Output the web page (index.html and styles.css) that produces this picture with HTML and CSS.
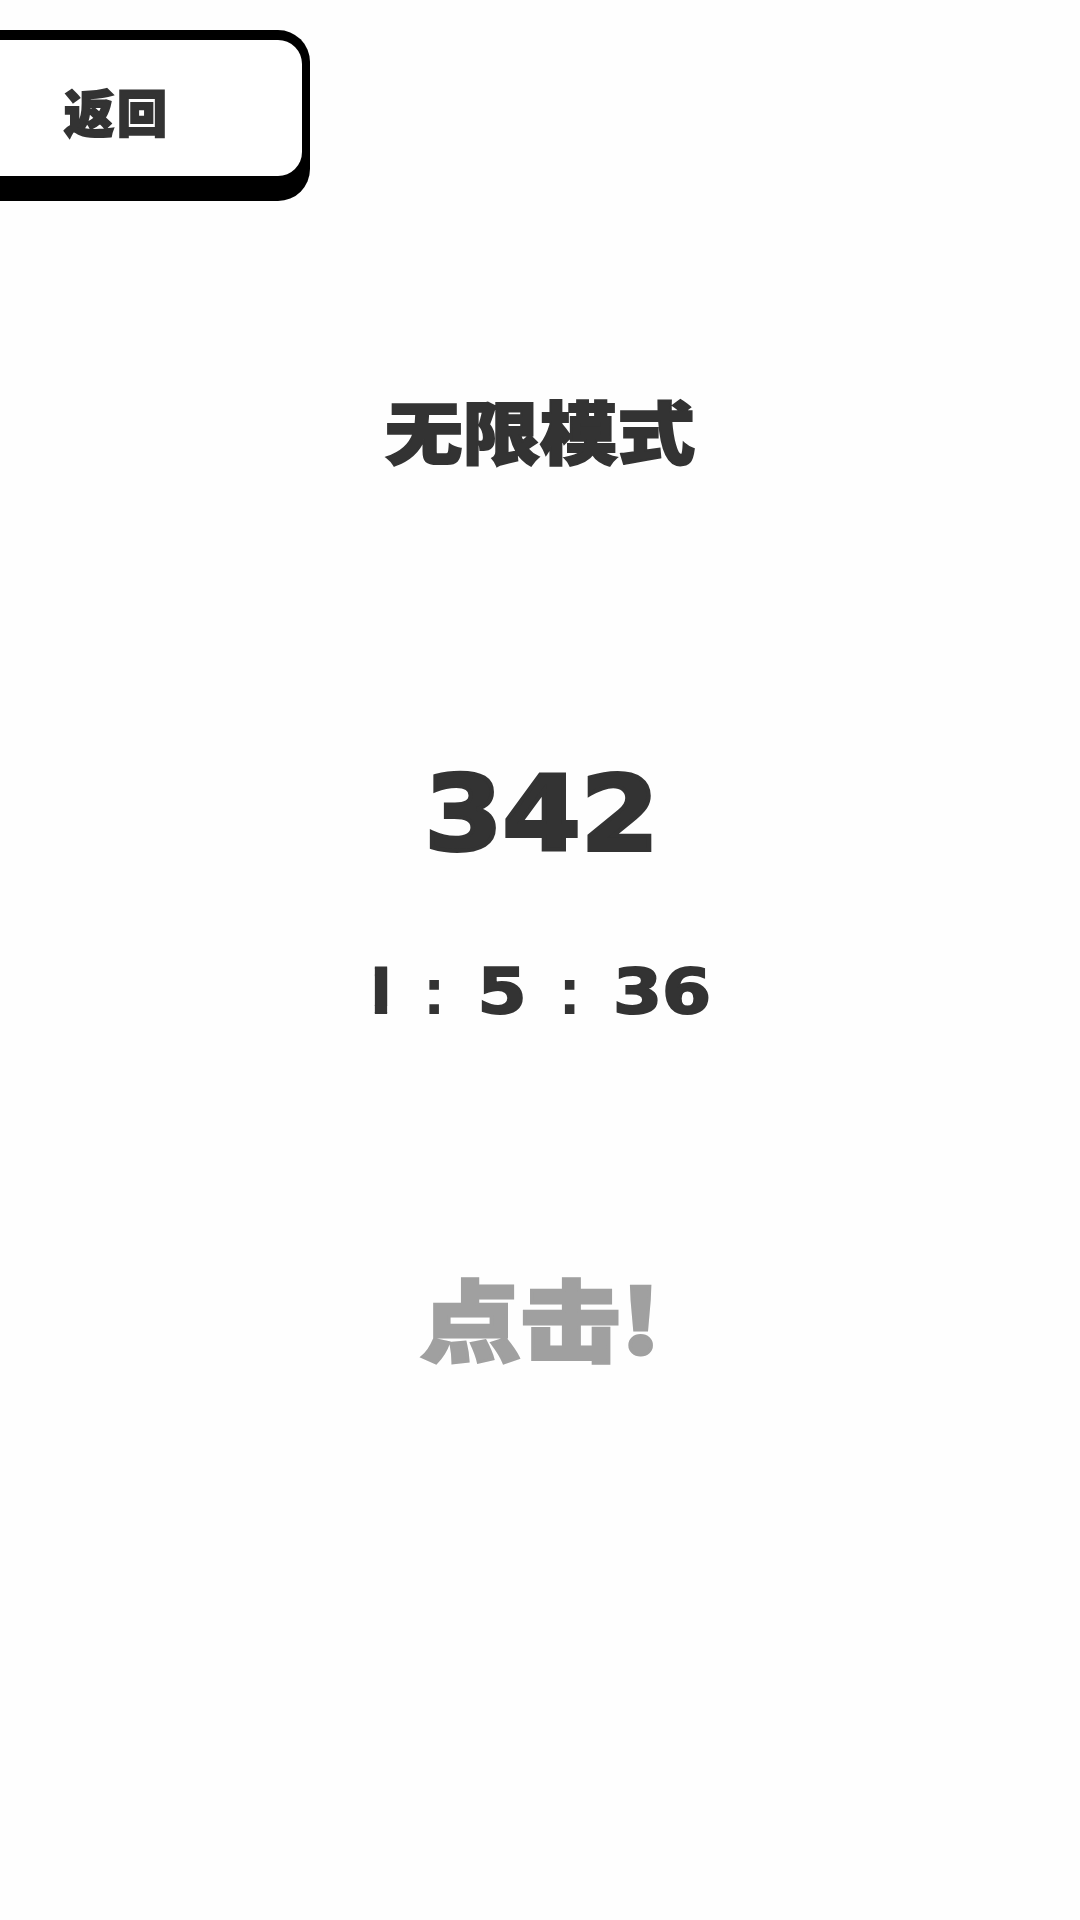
FILE: index.html
```html
<!DOCTYPE html>
<html lang="zh-CN">

<head>
  <meta charset="UTF-8">
  <meta name="viewport" content="width=device-width, initial-scale=1.0">
  <title>无限模式</title>
  <link rel="stylesheet" href="styles.css">
</head>

<body>
  <button class="back"><span class="back-label">返回</span></button>
  <h1 class="mode">无限模式</h1>
  <div class="score">342</div>
  <div class="timer">
    <span class="one">1</span>
    <span class="sep">:</span>
    <span>5</span>
    <span class="sep">:</span>
    <span>36</span>
  </div>
  <div class="tap">点击!</div>
</body>

</html>
```

FILE: styles.css
```css
html, body {
  margin: 0;
  height: 1920px;
  overflow: hidden;
  background: #fefefe;
}

body {
  display: flex;
  flex-direction: column;
  align-items: center;
  color: #333;
  font-family: "Noto Sans CJK SC", sans-serif;
  font-weight: 900;
}

.back {
  box-sizing: border-box;
  align-self: flex-start;
  width: 350px;
  height: 171px;
  margin: 30px 0 0 -40px;
  padding: 10px 8px 25px 0;
  background: #000;
  border: 0;
  border-radius: 32px;
  font: inherit;
}

.back-label {
  display: block;
  height: 136px;
  padding-left: 104px;
  background: #fff;
  border-radius: 0 24px 24px 0;
  color: #333;
  font-size: 50px;
  letter-spacing: 3px;
  line-height: 140px;
  text-align: left;
  -webkit-text-stroke: 2px #333;
}

.mode {
  margin: 180px 0 0;
  font-size: 68px;
  font-weight: 900;
  line-height: 98px;
  transform: scaleX(1.14);
  -webkit-text-stroke: 2px #333;
}

.score {
  margin-top: 270px;
  padding-left: 3px;
  font-family: "DejaVu Sans", sans-serif;
  font-weight: 700;
  font-size: 104px;
  line-height: 130px;
  transform: scaleX(1.08);
  -webkit-text-stroke: 4px #333;
}

.timer {
  display: flex;
  gap: 28px;
  margin-top: 73px;
  font-family: "DejaVu Sans", sans-serif;
  font-weight: 700;
  font-size: 63px;
  line-height: 80px;
  transform: scaleX(1.12);
  -webkit-text-stroke: 2px #333;
}

.timer .sep {
  font-weight: 400;
}

.timer .one {
  margin: 0 -12px;
  clip-path: inset(0 35% 0 40%);
}

.tap {
  margin-top: 229px;
  color: #a0a0a0;
  font-size: 88px;
  line-height: 110px;
  transform: scaleX(1.14);
  -webkit-text-stroke: 3px #a0a0a0;
}
```
